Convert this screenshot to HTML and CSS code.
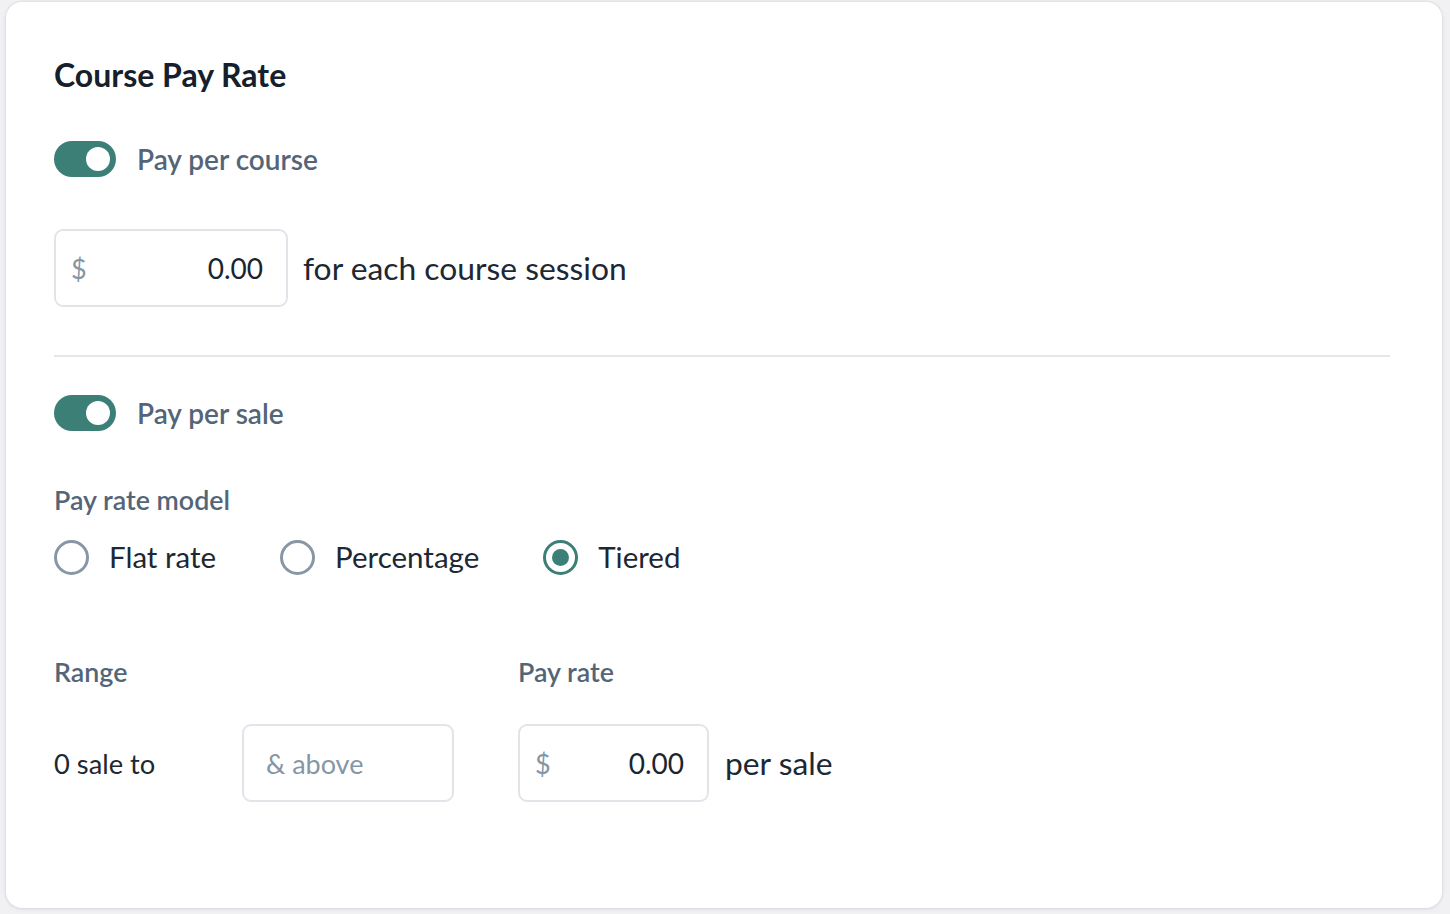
FILE: index.html
```html
<!DOCTYPE html>
<html lang="en">
<head>
<meta charset="utf-8">
<title>Course Pay Rate</title>
<link rel="stylesheet" href="styles.css">
</head>
<body>
<div class="card">
  <h1 class="title">Course Pay Rate</h1>

  <div class="toggle-row toggle-first">
    <span class="toggle"><span class="knob"></span></span>
    <span class="toggle-label">Pay per course</span>
  </div>

  <div class="amount-row">
    <div class="input money course-input">
      <span class="currency">$</span>
      <span class="value">0.00</span>
    </div>
    <span class="suffix">for each course session</span>
  </div>

  <hr class="divider">

  <div class="toggle-row toggle-second">
    <span class="toggle"><span class="knob"></span></span>
    <span class="toggle-label">Pay per sale</span>
  </div>

  <div class="field-label model-label">Pay rate model</div>
  <div class="radios">
    <label class="radio"><span class="circle"></span><span class="radio-text">Flat rate</span></label>
    <label class="radio"><span class="circle"></span><span class="radio-text">Percentage</span></label>
    <label class="radio checked"><span class="circle"><span class="dot"></span></span><span class="radio-text">Tiered</span></label>
  </div>

  <div class="tiers">
    <div class="field-label range-label">Range</div>
    <div class="field-label rate-label">Pay rate</div>
    <div class="tier-from">0 sale to</div>
    <div class="input placeholder-input"><span class="placeholder">&amp; above</span></div>
    <div class="rate-cell">
      <div class="input money rate-input">
        <span class="currency">$</span>
        <span class="value">0.00</span>
      </div>
      <span class="suffix">per sale</span>
    </div>
  </div>
</div>
</body>
</html>
```

FILE: styles.css
```css
* { box-sizing: border-box; }

html, body {
  margin: 0;
  padding: 0;
  background: #f1f1f4;
  font-family: Lato, "Noto Sans", sans-serif;
}

body {
  padding: 2px 8px 6px 6px;
}

.card {
  background: #ffffff;
  border-radius: 16px;
  box-shadow: 0 0 3px rgba(40, 40, 70, 0.12), 0 1px 4px rgba(40, 40, 70, 0.08);
  height: 906px;
  padding: 56px 52px 0 48px;
  display: flex;
  flex-direction: column;
  align-items: flex-start;
}

.title {
  margin: 0;
  font-size: 32px;
  line-height: 34px;
  font-weight: 700;
  color: #15202c;
}

.toggle-row {
  display: flex;
  align-items: center;
  gap: 21px;
}

.toggle-first { margin-top: 49px; }
.toggle-second { margin-top: 38px; }

.toggle {
  width: 62px;
  height: 36px;
  border-radius: 18px;
  background: #3b7f77;
  display: flex;
  align-items: center;
  justify-content: flex-end;
  padding-right: 6px;
}

.knob {
  width: 24px;
  height: 24px;
  border-radius: 50%;
  background: #ffffff;
}

.toggle-label {
  font-size: 28px;
  font-weight: 600;
  color: #536578;
  line-height: 30px;
}

.amount-row {
  margin-top: 52px;
  display: flex;
  align-items: center;
  gap: 15px;
}

.input {
  height: 78px;
  border: 2px solid #e1e5ea;
  border-radius: 9px;
  display: flex;
  align-items: center;
  font-size: 27px;
}

.money {
  justify-content: space-between;
  padding: 0 23px 0 15px;
}

.money .value { font-size: 28px; }

.course-input { width: 234px; }
.rate-input { width: 191px; }

.currency {
  color: #8596a6;
}

.value {
  color: #1a2530;
}

.suffix {
  font-size: 31.8px;
  color: #1c2833;
}

.divider {
  align-self: stretch;
  margin: 48px 0 0 0;
  border: 0;
  border-top: 2px solid #e6e6e6;
  height: 0;
}

.field-label {
  font-size: 26.8px;
  font-weight: 600;
  color: #536578;
  line-height: 30px;
}

.model-label { margin-top: 54px; }

.radios {
  margin-top: 24px;
  display: flex;
  align-items: center;
  gap: 64px;
}

.radio {
  display: flex;
  align-items: center;
  gap: 20px;
}

.circle {
  width: 35px;
  height: 35px;
  border-radius: 50%;
  border: 3px solid #8797a6;
  display: flex;
  align-items: center;
  justify-content: center;
}

.checked .circle {
  border-color: #3b7f77;
}

.dot {
  width: 17px;
  height: 17px;
  border-radius: 50%;
  background: #3b7f77;
}

.radio-text {
  font-size: 29.5px;
  color: #1c2833;
  line-height: 36px;
}

.tiers {
  margin-top: 82px;
  display: grid;
  grid-template-columns: 188px 276px auto;
  row-gap: 37px;
  align-items: center;
}

.range-label { grid-column: 1 / span 2; }
.rate-label { grid-column: 3; }

.tier-from {
  font-size: 27.3px;
  color: #1c2833;
}

.placeholder-input {
  width: 212px;
  padding: 0 22px;
}

.placeholder {
  color: #8596a6;
}

.rate-cell {
  display: flex;
  align-items: center;
  gap: 16px;
}
```
